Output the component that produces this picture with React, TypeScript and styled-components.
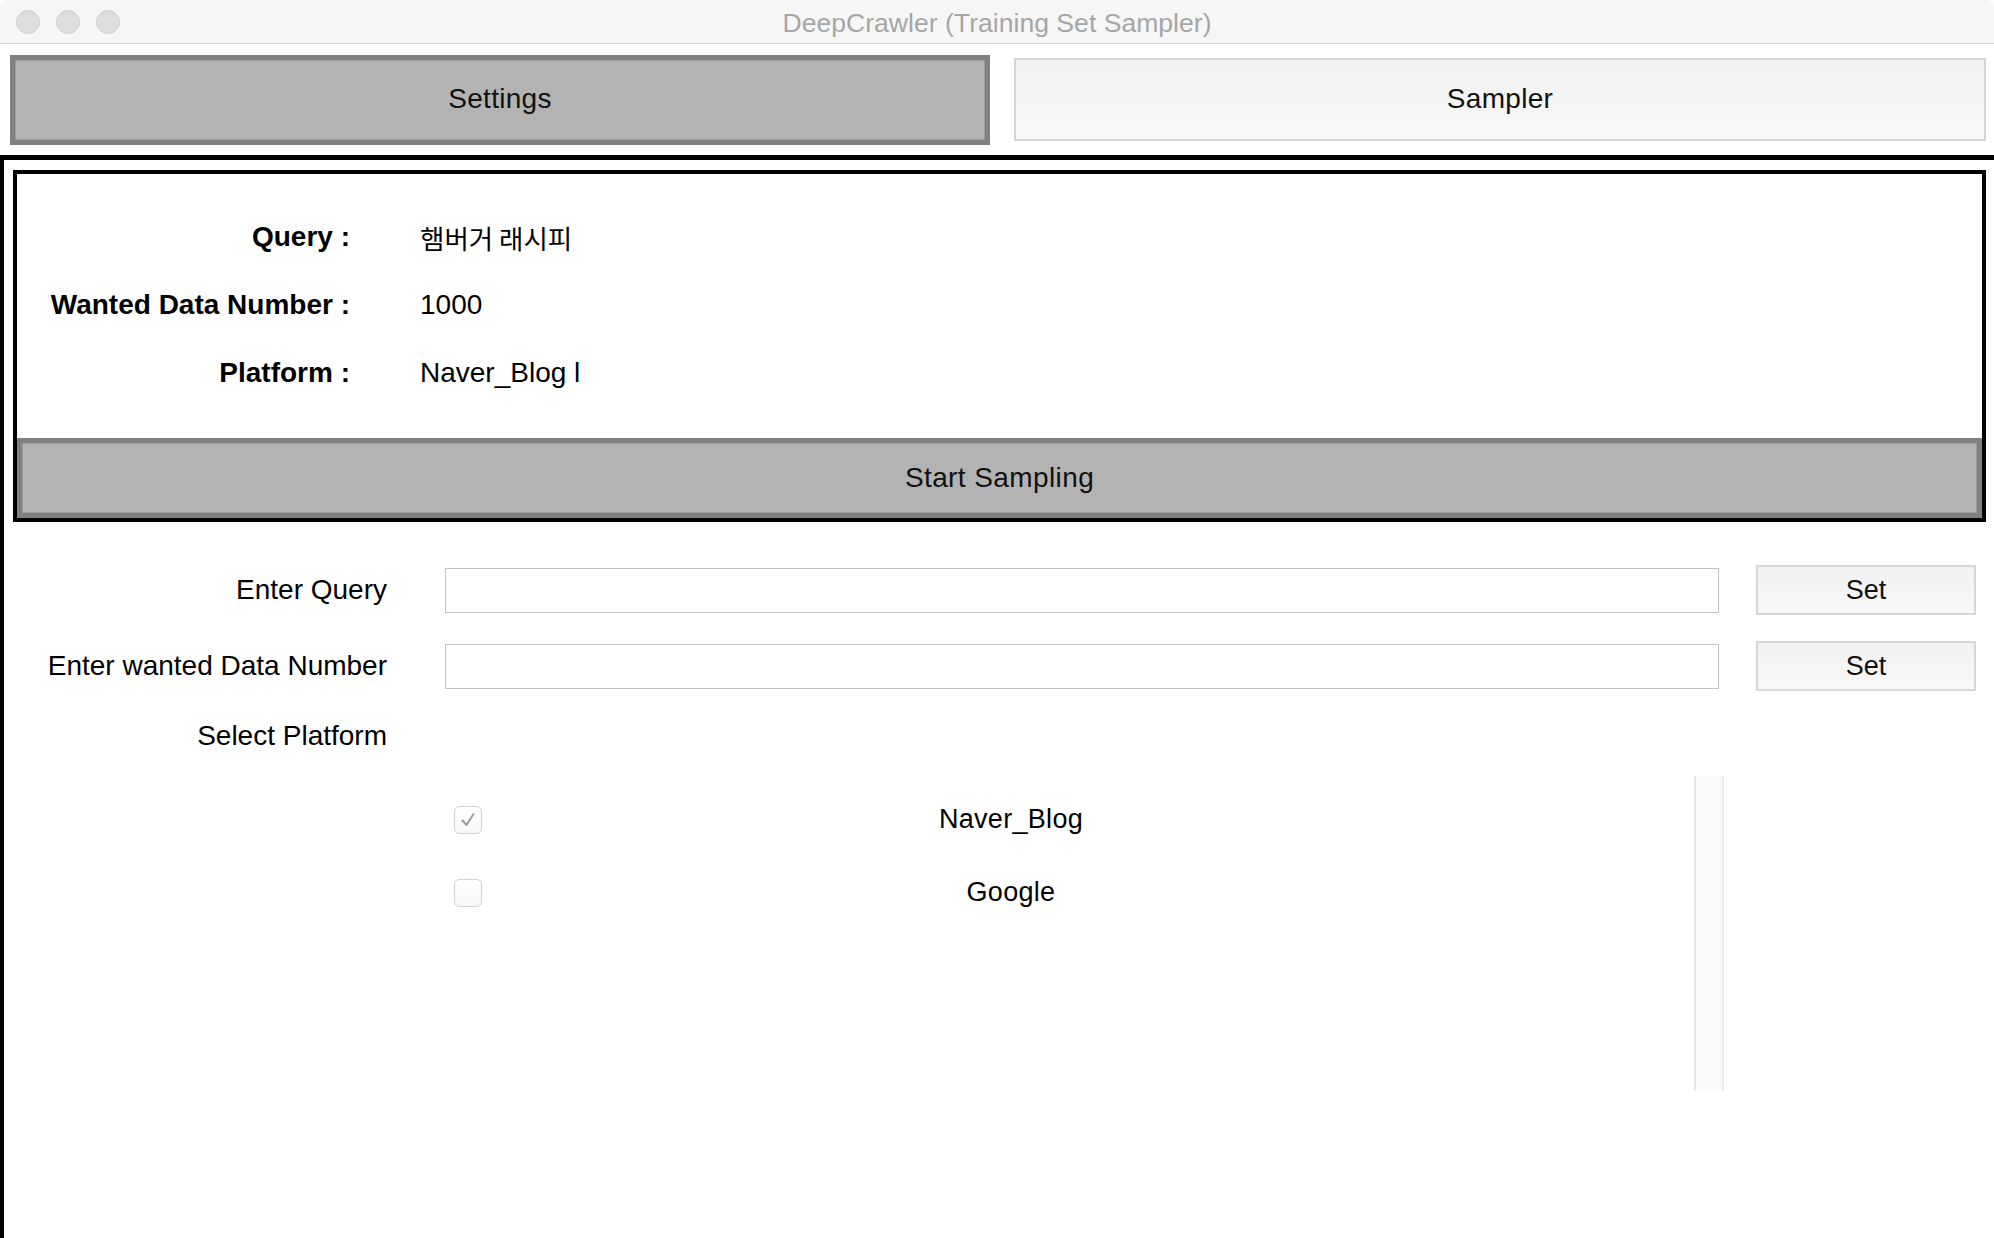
import React from 'react';
import styled, { createGlobalStyle } from 'styled-components';

const GlobalStyle = createGlobalStyle`
  html, body {
    margin: 0;
    padding: 0;
    background: #ffffff;
  }
  body {
    font-family: "Liberation Sans", "Noto Sans CJK KR", Arial, sans-serif;
    color: #111111;
  }
  * {
    box-sizing: border-box;
  }
`;

const Window = styled.div`
  width: 1994px;
  height: 1238px;
  display: flex;
  flex-direction: column;
  overflow: hidden;
  background: #ffffff;
`;

const TitleBar = styled.div`
  height: 44px;
  flex-shrink: 0;
  display: grid;
  grid-template-columns: 1fr auto 1fr;
  align-items: center;
  background: #f6f6f6;
  border-bottom: 1px solid #d3d3d3;
  border-radius: 8px 8px 0 0;
`;

const Lights = styled.div`
  display: flex;
  gap: 16px;
  padding-left: 16px;
`;

const Light = styled.span`
  width: 24px;
  height: 24px;
  border-radius: 50%;
  background: #dddddd;
  border: 1px solid #d0d0d0;
`;

const WindowTitle = styled.div`
  font-size: 26.6px;
  color: #a6a6a6;
  line-height: 1;
  padding-top: 3px;
`;

const TabBar = styled.div`
  flex-shrink: 0;
  display: grid;
  grid-template-columns: 1fr 1fr;
  column-gap: 20px;
  padding: 11px 4px 10px 10px;
`;

const Tab = styled.button<{ $active?: boolean }>`
  height: ${p => (p.$active ? '90px' : '83px')};
  margin: ${p => (p.$active ? '0' : '3px 4px 4px')};
  display: flex;
  align-items: center;
  justify-content: center;
  font-family: inherit;
  font-size: 28px;
  letter-spacing: 0.3px;
  color: #111111;
  cursor: pointer;
  border: ${p => (p.$active ? '5px solid #808080' : '2px solid #d6d6d6')};
  background: ${p => (p.$active ? '#b3b3b3' : 'linear-gradient(#f1f1f1, #f8f8f8)')};
  box-shadow: ${p => (p.$active ? 'inset 0 0 0 1px #9c9c9c' : 'none')};
  padding: 0 0 2px;
`;

const Pane = styled.div`
  flex: 1;
  border-top: 5px solid #000000;
  border-left: 4px solid #000000;
  padding: 10px 8px 0 9px;
  display: flex;
  flex-direction: column;
`;

const InfoBox = styled.div`
  border: 4px solid #000000;
  display: flex;
  flex-direction: column;
`;

const InfoRows = styled.div`
  padding: 29px 0 31px;
`;

const InfoRow = styled.div`
  height: 68px;
  display: grid;
  grid-template-columns: 333px 1fr;
  column-gap: 70px;
  align-items: center;
`;

const InfoLabel = styled.div`
  font-size: 28px;
  font-weight: 700;
  text-align: right;
  color: #000000;
`;

const InfoValue = styled.div<{ $cjk?: boolean }>`
  font-size: ${p => (p.$cjk ? '26.5px' : '28px')};
  font-family: ${p =>
    p.$cjk ? '"Noto Sans CJK KR", "Liberation Sans", sans-serif' : 'inherit'};
  color: #000000;
`;

const StartButton = styled.button`
  height: 80px;
  border: 5px solid #808080;
  box-shadow: inset 0 0 0 1px #9c9c9c;
  background: #b3b3b3;
  font-family: inherit;
  font-size: 28px;
  letter-spacing: 0.4px;
  color: #111111;
  cursor: pointer;
  padding: 0;
`;

const Form = styled.div`
  margin-top: 43px;
  display: grid;
  grid-template-columns: 395px 1fr 220px;
  column-gap: 37px;
  margin-right: 10px;
`;

const FieldRow = styled.div<{ $gap: number }>`
  display: contents;
  & > * {
    margin-bottom: ${p => p.$gap}px;
  }
`;

const FieldLabel = styled.div`
  height: 50px;
  display: flex;
  align-items: center;
  justify-content: flex-end;
  padding-right: 21px;
  font-size: 28px;
  color: #000000;
`;

const TextInput = styled.input`
  align-self: center;
  height: 45px;
  width: 100%;
  border: 1px solid #c2c2c2;
  background: #ffffff;
  font-family: inherit;
  font-size: 26px;
  padding: 0 8px;
  outline: none;
`;

const SetButton = styled.button`
  height: 50px;
  border: 2px solid #d6d6d6;
  background: linear-gradient(#f1f1f1, #f8f8f8);
  font-family: inherit;
  font-size: 27px;
  color: #111111;
  cursor: pointer;
  padding: 0;
`;

const Spacer = styled.div``;

const PlatformList = styled.div`
  grid-column: 2;
  height: 315px;
  margin-right: -5px;
  display: flex;
`;

const ListBody = styled.div`
  flex: 1;
  padding-top: 7px;
`;

const ListItem = styled.label`
  height: 73px;
  display: grid;
  grid-template-columns: 28px 1058px;
  align-items: center;
  padding-left: 9px;
`;

const CheckBox = styled.span`
  width: 28px;
  height: 28px;
  border-radius: 5px;
  border: 1px solid #d2d2d2;
  background: linear-gradient(#ffffff, #f7f7f7);
  display: flex;
  align-items: center;
  justify-content: center;
`;

const ItemText = styled.span`
  text-align: center;
  font-size: 27px;
  letter-spacing: 0.3px;
  color: #000000;
`;

const ScrollTrack = styled.div`
  width: 30px;
  background: #fafafa;
  border-left: 2px solid #e6e6e6;
  border-right: 2px solid #ececec;
`;

const platforms = [
  { name: 'Naver_Blog', checked: true },
  { name: 'Google', checked: false },
];

const CheckMark = () => (
  <svg width="18" height="18" viewBox="0 0 18 18">
    <polyline
      points="3.5,9.5 7.5,14 14.5,3"
      fill="none"
      stroke="#9a9a9a"
      strokeWidth="2"
      strokeLinecap="round"
      strokeLinejoin="round"
    />
  </svg>
);

export default function App() {
  return (
    <>
      <GlobalStyle />
      <Window>
        <TitleBar>
          <Lights>
            <Light />
            <Light />
            <Light />
          </Lights>
          <WindowTitle>DeepCrawler (Training Set Sampler)</WindowTitle>
          <div />
        </TitleBar>

        <TabBar>
          <Tab $active>Settings</Tab>
          <Tab>Sampler</Tab>
        </TabBar>

        <Pane>
          <InfoBox>
            <InfoRows>
              <InfoRow>
                <InfoLabel>Query :</InfoLabel>
                <InfoValue $cjk>햄버거 래시피</InfoValue>
              </InfoRow>
              <InfoRow>
                <InfoLabel>Wanted Data Number :</InfoLabel>
                <InfoValue>1000</InfoValue>
              </InfoRow>
              <InfoRow>
                <InfoLabel>Platform :</InfoLabel>
                <InfoValue>Naver_Blog l</InfoValue>
              </InfoRow>
            </InfoRows>
            <StartButton>Start Sampling</StartButton>
          </InfoBox>

          <Form>
            <FieldRow $gap={26}>
              <FieldLabel>Enter Query</FieldLabel>
              <TextInput />
              <SetButton>Set</SetButton>
            </FieldRow>
            <FieldRow $gap={20}>
              <FieldLabel>Enter wanted Data Number</FieldLabel>
              <TextInput />
              <SetButton>Set</SetButton>
            </FieldRow>
            <FieldRow $gap={15}>
              <FieldLabel>Select Platform</FieldLabel>
              <Spacer />
              <Spacer />
            </FieldRow>
            <PlatformList>
              <ListBody>
                {platforms.map(p => (
                  <ListItem key={p.name}>
                    <CheckBox>{p.checked && <CheckMark />}</CheckBox>
                    <ItemText>{p.name}</ItemText>
                  </ListItem>
                ))}
              </ListBody>
              <ScrollTrack />
            </PlatformList>
          </Form>
        </Pane>
      </Window>
    </>
  );
}
